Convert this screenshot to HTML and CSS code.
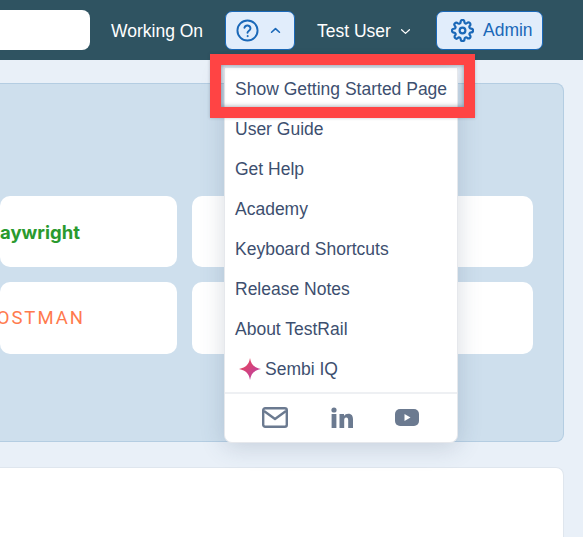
FILE: index.html
```html
<!DOCTYPE html>
<html lang="en">
<head>
    <meta charset="UTF-8">
    <meta name="viewport" content="width=device-width, initial-scale=1.0">
    <title>TestRail</title>
    <link rel="stylesheet" href="styles.css">
</head>
<body>
<header class="topbar">
    <div class="search"></div>
    <a class="nav-link working">Working On</a>
    <button class="btn help-btn" type="button">
        <svg class="help-icon" viewBox="0 0 24 24" width="23" height="23" fill="none" stroke="#1a68b8" stroke-width="2" stroke-linecap="round">
            <circle cx="12" cy="12" r="10.500"/>
            <path d="M8.800 9.200a3.200 3.200 0 0 1 6.300.8c0 2.100-3.100 2.500-3.100 4.400"/>
            <circle cx="12" cy="17.800" r="0.600" fill="#1a68b8" stroke-width="1"/>
        </svg>
        <svg viewBox="0 0 12 8" width="11" height="7" fill="none" stroke="#1a68b8" stroke-width="1.800" stroke-linecap="round" stroke-linejoin="round"><path d="M1.500 6 6 1.800 10.500 6"/></svg>
    </button>
    <a class="nav-link user">
        Test User
        <svg viewBox="0 0 12 8" width="11" height="7" fill="none" stroke="#fff" stroke-width="1.400" stroke-linecap="round" stroke-linejoin="round"><path d="M1.500 2 6 6.200 10.500 2"/></svg>
    </a>
    <button class="btn admin-btn" type="button">
        <svg viewBox="0 0 24 24" width="23" height="23" fill="none" stroke="#1a68b8" stroke-width="2.300" stroke-linecap="round" stroke-linejoin="round">
            <circle cx="12" cy="12" r="3"/>
            <path d="M19.400 15a1.650 1.650 0 0 0 .33 1.820l.06.06a2 2 0 1 1-2.830 2.830l-.06-.06a1.650 1.650 0 0 0-2.800 1.170V21a2 2 0 1 1-4 0v-.09a1.650 1.650 0 0 0-2.880-1.110l-.06.06a2 2 0 1 1-2.830-2.830l.06-.06a1.650 1.650 0 0 0-1.170-2.800H3a2 2 0 1 1 0-4h.09A1.650 1.650 0 0 0 4.200 7.290l-.06-.06a2 2 0 1 1 2.830-2.830l.06.06a1.650 1.650 0 0 0 1.820.33H9a1.650 1.650 0 0 0 1-1.510V3a2 2 0 1 1 4 0v.09a1.650 1.650 0 0 0 2.800 1.170l.06-.06a2 2 0 1 1 2.830 2.830l-.06.06a1.650 1.650 0 0 0-.33 1.820V9a1.650 1.650 0 0 0 1.510 1H21a2 2 0 1 1 0 4h-.09a1.650 1.650 0 0 0-1.510 1z"/>
        </svg>
        Admin
    </button>
</header>

<main class="content">
    <section class="tools-panel">
        <div class="tool-grid">
            <div class="tool-card"><span class="logo-playwright">Playwright</span></div>
            <div class="tool-card"></div>
            <div class="tool-card"><span class="logo-postman">POSTMAN</span></div>
            <div class="tool-card"></div>
        </div>
    </section>
    <section class="lower-panel"></section>
</main>

<nav class="help-menu">
    <a class="menu-item">Show Getting Started Page</a>
    <a class="menu-item">User Guide</a>
    <a class="menu-item">Get Help</a>
    <a class="menu-item">Academy</a>
    <a class="menu-item">Keyboard Shortcuts</a>
    <a class="menu-item">Release Notes</a>
    <a class="menu-item">About TestRail</a>
    <a class="menu-item sembi">
        <svg viewBox="0 0 24 24" width="22" height="22">
            <defs>
                <linearGradient id="sembi-grad" x1="0" y1="0" x2="1" y2="1">
                    <stop offset="0" stop-color="#f0474f"/>
                    <stop offset="1" stop-color="#b43fb0"/>
                </linearGradient>
            </defs>
            <path fill="url(#sembi-grad)" d="M12 0c1.200 7 4 10.200 12 12-8 1.800-10.800 5-12 12-1.200-7-4-10.200-12-12 8-1.800 10.800-5 12-12z"/>
        </svg>
        Sembi IQ
    </a>
    <div class="menu-social">
        <svg viewBox="0 0 26 21" width="26" height="21" fill="none" stroke="#6b7a90" stroke-width="2.400" stroke-linejoin="round">
            <rect x="1.200" y="1.200" width="23.600" height="18.600" rx="2"/>
            <path d="M2 4l11 8 11-8"/>
        </svg>
        <svg viewBox="0 0 22 21" width="22" height="21" fill="#6b7a90">
            <circle cx="3" cy="3" r="2.600"/>
            <rect x="0.600" y="7" width="4.800" height="14"/>
            <path d="M8.500 7h4.500v2c.9-1.400 2.500-2.300 4.300-2.300 3.500 0 4.700 2.300 4.700 5.800V21h-4.800v-7.500c0-1.800-.5-3-2-3s-2 1.300-2 3V21H8.500z"/>
        </svg>
        <svg viewBox="0 0 24 17" width="24" height="17">
            <rect width="24" height="17" rx="5" fill="#6b7a90"/>
            <path d="M9.500 5l6 3.500-6 3.500z" fill="#fff"/>
        </svg>
    </div>
</nav>

<div class="highlight"></div>
</body>
</html>
```

FILE: styles.css
```css
* {
    box-sizing: border-box;
    margin: 0;
    padding: 0;
}
html, body {
    height: 537px;
    overflow: hidden;
}
body {
    font-family: "Liberation Sans", Arial, sans-serif;
    background-color: #e9f0f8;
    color: #3d4f6f;
    position: relative;
}
.topbar {
    height: 60px;
    background-color: #2f5361;
    display: flex;
    align-items: center;
}
.search {
    flex: none;
    width: 90px;
    height: 40px;
    background-color: #fff;
    border-radius: 0 8px 8px 0;
    margin-right: 21px;
}
.nav-link {
    color: #fff;
    font-size: 17.500px;
    display: flex;
    align-items: center;
    white-space: nowrap;
    padding-top: 2px;
}
.working {
    width: 92px;
    margin-right: 22px;
}
.user {
    width: 93px;
    gap: 9px;
    margin-right: 26px;
}
.user svg {
    flex: none;
    margin-top: 1px;
}
.btn {
    flex: none;
    height: 39px;
    background-color: #e1edfb;
    border: 1px solid #1a68b8;
    border-radius: 7px;
    color: #1a68b8;
    font-family: inherit;
    font-size: 17.500px;
    display: flex;
    align-items: center;
}
.help-btn {
    width: 70px;
    margin-right: 22px;
    padding-left: 10px;
    gap: 11px;
}
.admin-btn {
    width: 107px;
    padding-left: 14px;
    gap: 9px;
}
.content {
    padding: 23px 19px 0 0;
}
.tools-panel {
    height: 359px;
    background-color: #cedfed;
    border: 1px solid #b4cde2;
    border-left: none;
    border-radius: 0 8px 8px 0;
    padding: 112px 30px 0 0;
}
.tool-grid {
    display: grid;
    grid-template-columns: 177px 341px;
    grid-template-rows: 71px 72px;
    gap: 15px;
}
.tool-card {
    background-color: #fff;
    border-radius: 10px;
    display: flex;
    align-items: center;
    justify-content: flex-end;
    overflow: hidden;
}
.logo-playwright {
    color: #2a9a2e;
    font-family: "Inter", sans-serif;
    font-size: 18.500px;
    font-weight: 700;
    margin-right: 97px;
    white-space: nowrap;
}
.logo-postman {
    color: #ff7a4d;
    font-family: "Roboto", sans-serif;
    font-size: 18.500px;
    letter-spacing: 2px;
    margin-right: 92px;
    white-space: nowrap;
}
.lower-panel {
    height: 90px;
    margin-top: 25px;
    background-color: #fff;
    border: 1px solid #dfe6ee;
    border-left: none;
    border-bottom: none;
    border-radius: 0 8px 0 0;
}
.help-menu {
    position: absolute;
    left: 224px;
    top: 68px;
    width: 234px;
    height: 375px;
    background-color: #fff;
    border: 1px solid #e6e8ec;
    border-top: none;
    border-radius: 0 0 8px 8px;
    box-shadow: 0 4px 24px rgba(60, 80, 110, 0.2);
    display: flex;
    flex-direction: column;
}
.menu-item {
    height: 40px;
    flex: none;
    display: flex;
    align-items: center;
    padding: 2px 0 0 10px;
    font-size: 17.500px;
    white-space: nowrap;
}
.sembi {
    padding-left: 14px;
    gap: 4px;
}
.menu-social {
    flex: 1;
    margin-top: 4px;
    border-top: 2px solid #eef0f3;
    display: flex;
    align-items: center;
    justify-content: space-between;
    padding: 0 38px 2px 37px;
}
.highlight {
    position: absolute;
    left: 210px;
    top: 54px;
    width: 265px;
    height: 64px;
    border: 11px solid #ff4444;
    box-shadow: inset 0 0 5px rgba(40, 50, 70, 0.5), 0 0 3px rgba(40, 50, 70, 0.25);
}
```
